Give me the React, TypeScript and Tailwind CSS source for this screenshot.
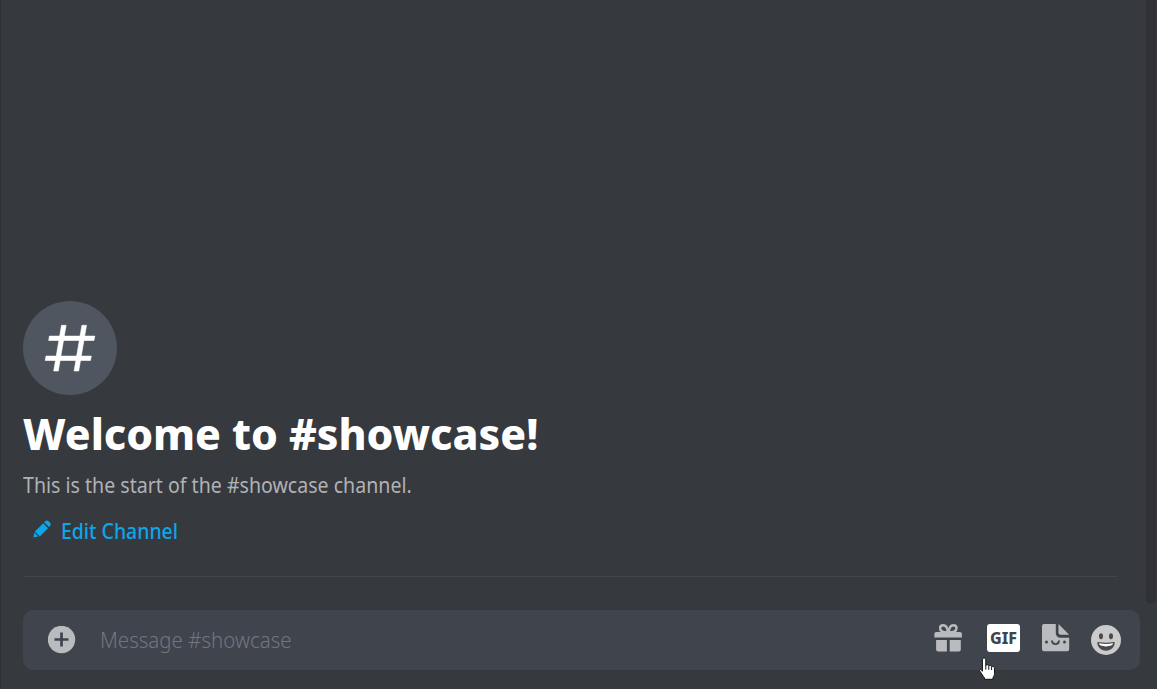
import React from "react";

function HashIcon() {
  return (
    <svg width="94" height="94" viewBox="23 301 94 94" fill="#fff" stroke="#fff" strokeWidth="0.6" strokeLinejoin="round">
      <path d="M61.5 325.3h4.6L58.3 371h-4.6z" />
      <path d="M81.9 325.3h4.6L78.7 371h-4.6z" />
      <path d="M49.4 336.1h45.4l-.8 4.4H48.7z" />
      <path d="M46 356.1h45.3l-.8 4.4H45.2z" />
    </svg>
  );
}

function PencilIcon() {
  return (
    <svg width="18" height="18" viewBox="33 520 18 18" fill="#0ea5e9">
      <path d="M33.3 537.6l1.2-5.2 3.9 4z" />
      <path d="M34.9 531.6l8.3-8.3 4.9 4.9-8.3 8.3z" />
      <path d="M44.2 522.3l1.1-1.1a2.4 2.4 0 0 1 3.2 0l1.5 1.5a2.4 2.4 0 0 1 0 3.2l-1.1 1.1z" />
    </svg>
  );
}

function PlusIcon() {
  return (
    <svg width="28" height="28" viewBox="0 0 28 28">
      <circle cx="13.5" cy="13.5" r="13.7" fill="#b9bbbe" />
      <path d="M13.5 6.5v14M6.5 13.5h14" stroke="#40444d" strokeWidth="2.7" />
    </svg>
  );
}

function GiftIcon() {
  return (
    <svg width="28" height="28" viewBox="934 624 28 28" fill="#b9bbbe">
      <g fill="none" stroke="#b9bbbe" strokeWidth="2.4">
        <path d="M947.8 632.5c-.2-4.2-2-7.2-4.6-7.2-2 0-3.1 1.3-3.1 3 0 2.8 3.3 4.2 7.7 4.2z" />
        <path d="M948.8 632.5c.2-4.2 2-7.2 4.6-7.2 2 0 3.1 1.3 3.1 3 0 2.8-3.3 4.2-7.7 4.2z" />
      </g>
      <path d="M936.7 632h23.2a2 2 0 0 1 2 2v3.4h-27.5V634a2 2 0 0 1 2.3-2z" />
      <path d="M936.1 640h10.8v11.4h-8.8a2 2 0 0 1-2-2z" />
      <path d="M949.7 640h11.1v9.4a2 2 0 0 1-2 2h-9.1z" />
    </svg>
  );
}

function StickerIcon() {
  return (
    <svg width="28" height="28" viewBox="1042 624 28 28">
      <path d="M1044 624h11.8v9.2a4.6 4.6 0 0 0 4.6 4.6h8.8v11.4a2 2 0 0 1-2 2H1044a2 2 0 0 1-2-2V626a2 2 0 0 1 2-2z" fill="#b9bbbe" />
      <path d="M1058.5 624l10.7 10.8h-8.5a2.2 2.2 0 0 1-2.2-2.2z" fill="#b9bbbe" />
      <circle cx="1046.5" cy="642" r="1.5" fill="#40444d" />
      <circle cx="1064.5" cy="642" r="1.5" fill="#40444d" />
      <path d="M1052 641.2c.8 3.8 6.2 3.8 7 0" stroke="#40444d" strokeWidth="1.8" fill="none" strokeLinecap="round" />
    </svg>
  );
}

function SmileIcon() {
  return (
    <svg width="30" height="30" viewBox="1091 625 30 30">
      <circle cx="1106" cy="640" r="15" fill="#cbcbcb" />
      <ellipse cx="1101" cy="636.3" rx="2" ry="3" fill="#4a4b4d" />
      <ellipse cx="1111" cy="636.3" rx="2" ry="3" fill="#4a4b4d" />
      <path d="M1097.3 642.7q0-.9 1-.7 7.7 1.6 15.4 0 1-.2 1 .7c0 4-3.6 8-8.7 8s-8.7-4-8.7-8z" fill="#4a4b4d" />
      <path d="M1098.8 643.3q7.2 1.5 14.4 0c-.3 1.8-3 3.1-7.2 3.1s-6.9-1.3-7.2-3.1z" fill="#fff" />
    </svg>
  );
}

function HandCursor() {
  return (
    <svg width="18" height="24" viewBox="0 0 18 24">
      <path d="M4.4 14.3V3c0-2.6 3.4-2.6 3.4 0v5.3c.8-.9 2.6-.7 3 .5.9-.7 2.4-.4 2.8.8 1.4-.6 2.9.2 2.9 1.8v5c0 2-.8 2.8-1.5 4.2v1.7H6.5v-1.5c-1.6-1.5-2.5-3.8-4.3-6.2-1.6-2.2.5-3.7 2.2-.3z" fill="#fff" stroke="#111" strokeWidth="1" />
      <path d="M7.8 8v4.6M10.8 9v3.8M13.6 10v3" stroke="#111" strokeWidth="1" />
    </svg>
  );
}

export default function App() {
  return (
    <div className="flex h-[689px] w-[1157px] overflow-hidden border-l border-[#303237] bg-[#36393e] font-['Noto_Sans',sans-serif]">
      <main className="flex w-[1145px] shrink-0 flex-col pl-[22px]">
        <section className="mr-[28px] flex h-[577px] flex-col justify-end border-b border-[#42454a]">
          <div className="size-[94px] shrink-0 rounded-full bg-[#4f565f]">
            <HashIcon />
          </div>
          <h1 className="mt-[9px] h-[60px] whitespace-nowrap text-[43px] leading-[60px] font-extrabold text-white">
            <span className="inline-block origin-left scale-x-[0.991]">Welcome to #showcase!</span>
          </h1>
          <p className="mt-[6px] h-[30px] whitespace-nowrap text-[21px] leading-[30px] text-[#b0b2b6]">
            <span className="inline-block origin-left scale-x-[0.932]">This is the start of the #showcase channel.</span>
          </p>
          <button className="mt-[15px] mb-[29px] flex h-[32px] items-center pl-[10px] text-[21px] leading-[32px] font-medium text-[#0ea5e9]">
            <span className="mb-[4px]"><PencilIcon /></span>
            <span className="ml-[10px] inline-block origin-left scale-x-[0.925]">Edit Channel</span>
          </button>
        </section>
        <div className="relative mt-[33px] flex h-[60px] w-[1117px] items-center rounded-[10px] bg-[#40444d]">
          <span className="mb-[1px] ml-[25px]"><PlusIcon /></span>
          <span className="ml-[23.5px] inline-block origin-left scale-x-[0.975] whitespace-nowrap pt-[2px] text-[21px] font-light text-[#72767d]">Message #showcase</span>
          <div className="mr-[19px] ml-auto flex items-center">
            <span className="mb-[4px]"><GiftIcon /></span>
            <span className="mb-[5px] ml-[25px] flex h-[28px] w-[33px] items-center justify-center rounded-[3px] bg-white text-[16px] leading-none font-extrabold text-[#40444d]">
              GIF
            </span>
            <span className="mb-[4px] ml-[22px]"><StickerIcon /></span>
            <span className="ml-[21px]"><SmileIcon /></span>
          </div>
          <div className="absolute top-[47px] left-[955px]"><HandCursor /></div>
        </div>
      </main>
      <div className="h-[604px] w-[10px] rounded-b-[5px] bg-[#2f3136]" />
    </div>
  );
}
